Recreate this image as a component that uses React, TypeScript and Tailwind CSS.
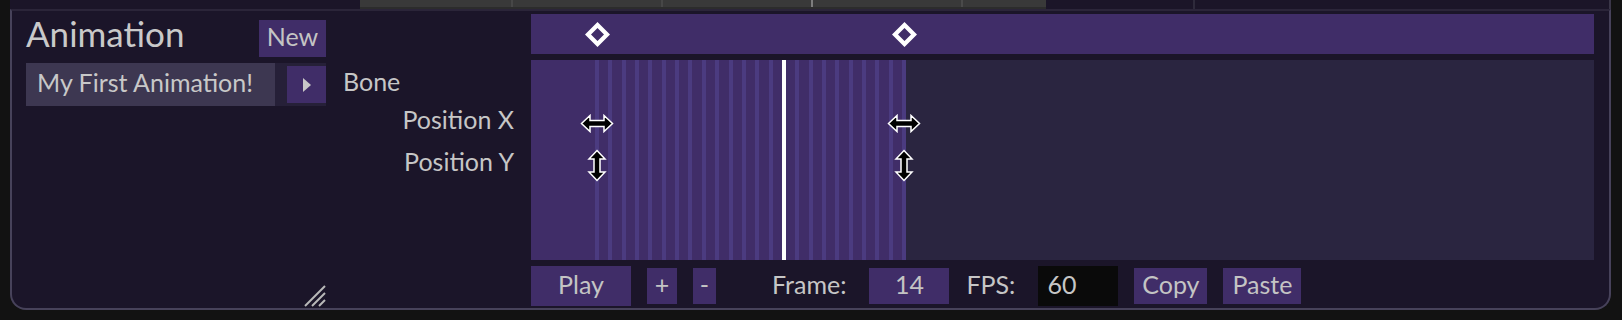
import React from "react";

const FRAME_W = 13.35;
const STRIPE_X0 = 64;
const LAST_FRAME = 23;
const KEYFRAMES = [0, 23];
const PLAYHEAD = 14;

const frameX = (f: number) => STRIPE_X0 + 2 + f * FRAME_W;

function Diamond() {
    return (
        <svg width="25" height="25" viewBox="0 0 25 25">
            <path d="M12.5 0 L25 12.5 L12.5 25 L0 12.5 Z M12.5 6 L6 12.5 L12.5 19 L19 12.5 Z" fill="#ffffff" fillRule="evenodd" />
        </svg>
    );
}

function HArrow() {
    return (
        <svg width="34" height="19" viewBox="0 0 34 19">
            <path d="M1.5 9.5 L10 1.5 L10 6.5 L24 6.5 L24 1.5 L32.5 9.5 L24 17.5 L24 12.5 L10 12.5 L10 17.5 Z" fill="#000" stroke="#fff" strokeWidth="1.5" strokeLinejoin="miter" />
        </svg>
    );
}

function VArrow() {
    return (
        <svg width="20" height="33" viewBox="0 0 20 33">
            <path d="M10 1.5 L18 10 L13 10 L13 23 L18 23 L10 31.5 L2 23 L7 23 L7 10 L2 10 Z" fill="#000" stroke="#fff" strokeWidth="1.5" strokeLinejoin="miter" />
        </svg>
    );
}

function Grip() {
    return (
        <svg width="22" height="22" viewBox="0 0 22 22">
            <g stroke="#b9b9b9" strokeWidth="2">
                <line x1="1" y1="21" x2="21" y2="1" />
                <line x1="8" y1="21" x2="21" y2="8" />
                <line x1="15" y1="21" x2="21" y2="15" />
            </g>
        </svg>
    );
}

const btn = "flex items-center justify-center pb-[3px] bg-[#402d68] text-[#c4c4c4]";

export default function App() {
    return (
        <div className="w-[1622px] h-[320px] bg-[#121212] pl-[10px] pr-[11px] text-[25px] text-[#c6c6c6]" style={{ fontFamily: "Lato, 'Noto Sans', sans-serif" }}>
            {/* upper panel, cut off */}
            <div className="flex h-[9px] border-r-2 border-[#3a3648]">
                <div className="w-[350px] bg-[#1b1528]" />
                <div className="flex w-[686px] bg-[#393939] border-b-2 border-[#2c2c2c]">
                    <div className="w-[151px]" />
                    <div className="w-[150px] border-l-2 border-[#474747]" />
                    <div className="w-[150px] border-l-2 border-[#474747]" />
                    <div className="w-[150px] border-l-2 border-[#7d7d7d]" />
                    <div className="flex-1 border-l-2 border-[#4a4a4a]" />
                </div>
                <div className="flex flex-1 bg-[#1b1528]">
                    <div className="w-[147px]" />
                    <div className="flex-1 border-l-2 border-[#2e2a3b]" />
                </div>
            </div>

            {/* animation panel */}
            <div className="flex h-[301px] bg-[#1b1529] border-2 border-[#47425a] border-t-[#2b2539] rounded-b-[16px] pl-[14px] pr-[15px]">
                {/* animations list */}
                <div className="flex flex-col w-[300px]">
                    <div className="flex justify-between mt-[8.5px] h-[37px]">
                        <span className="text-[35px] leading-[30px] -mt-[2px] text-[#c9c9c9]">Animation</span>
                        <button className={`${btn} w-[67px] h-[37px]`}>New</button>
                    </div>
                    <div className="flex mt-[6.5px] h-[43px]">
                        <div className="flex items-center w-[249px] bg-[#3d3751] pl-[11px] pb-[4px] text-[#c8c8c8]">My First Animation!</div>
                        <div className="flex flex-1 justify-end items-center bg-[#262038]">
                            <button className="flex items-center justify-center w-[39px] h-[37px] bg-[#402d68]">
                                <svg width="10" height="14" viewBox="0 0 10 14">
                                    <path d="M1 0 L9 7 L1 14 Z" fill="#c8c8c8" />
                                </svg>
                            </button>
                        </div>
                    </div>
                    <div className="mt-auto self-end mb-[1px]">
                        <Grip />
                    </div>
                </div>

                {/* track names */}
                <div className="flex flex-col w-[188px] pt-[55px] pl-[17px]">
                    <span className="leading-[30px]">Bone</span>
                    <span className="leading-[30px] mt-[8px] self-end">Position X</span>
                    <span className="leading-[30px] mt-[12px] self-end">Position Y</span>
                </div>

                {/* timeline */}
                <div className="flex flex-col w-[1063px] ml-[17px]">
                    <div className="relative h-[40px] mt-[3px] bg-[#402d68]">
                        {KEYFRAMES.map((f) => (
                            <div key={f} className="absolute top-[7.5px]" style={{ left: frameX(f) - 12.5 }}>
                                <Diamond />
                            </div>
                        ))}
                    </div>

                    <div className="relative h-[200px] mt-[6px] bg-[#2a2540]">
                        <div className="h-full bg-[#402d68]" style={{ width: STRIPE_X0 + LAST_FRAME * FRAME_W + 4 }} />
                        {Array.from({ length: LAST_FRAME + 1 }, (_, i) => i)
                            .filter((i) => i !== PLAYHEAD)
                            .map((i) => (
                                <div key={i} className="absolute top-0 h-full w-[4px] bg-[#4b3b80]" style={{ left: STRIPE_X0 + i * FRAME_W }} />
                            ))}
                        <div className="absolute top-0 h-full w-[4px] bg-white" style={{ left: STRIPE_X0 + PLAYHEAD * FRAME_W }} />
                        {KEYFRAMES.map((f) => (
                            <React.Fragment key={f}>
                                <div className="absolute top-[54px]" style={{ left: frameX(f) - 17 }}>
                                    <HArrow />
                                </div>
                                <div className="absolute top-[89px]" style={{ left: frameX(f) - 10 }}>
                                    <VArrow />
                                </div>
                            </React.Fragment>
                        ))}
                    </div>

                    {/* controls */}
                    <div className="flex items-center h-[40px] mt-[6px]">
                        <button className={`${btn} w-[100px] h-[40px]`}>Play</button>
                        <button className={`${btn} w-[30px] h-[36px] ml-[16px]`}>+</button>
                        <button className={`${btn} w-[23px] h-[36px] ml-[16px]`}>-</button>
                        <span className="ml-[56px] pb-[3px]">Frame:</span>
                        <div className={`${btn} w-[80px] h-[36px] ml-[23px]`}>14</div>
                        <span className="ml-[17px] pb-[3px]">FPS:</span>
                        <div className="flex items-center w-[80px] h-[40px] ml-[23px] bg-[#0a0a0a] pl-[9px] pb-[3px]">60</div>
                        <button className={`${btn} w-[73px] h-[36px] ml-[16px]`}>Copy</button>
                        <button className={`${btn} w-[78px] h-[36px] ml-[16px]`}>Paste</button>
                    </div>
                </div>
            </div>
        </div>
    );
}
